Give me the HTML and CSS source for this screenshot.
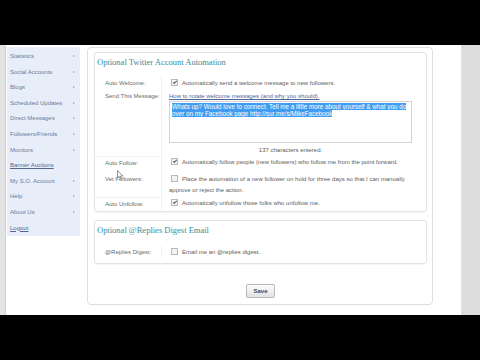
FILE: index.html
```html
<!DOCTYPE html>
<html lang="en">
<head>
    <meta charset="UTF-8">
    <title>Account Automation</title>
    <link rel="stylesheet" href="styles.css">
</head>
<body>
    <div class="screen">
        <div class="edge"></div>
        <ul class="sidebar">
            <li class="menu">Statistics</li>
            <li class="menu">Social Accounts</li>
            <li class="menu">Blogs</li>
            <li class="menu">Scheduled Updates</li>
            <li class="menu">Direct Messages</li>
            <li class="menu">Followers/Friends</li>
            <li class="menu">Monitors</li>
            <li><a href="#">Banner Auctions</a></li>
            <li class="menu">My S.O. Account</li>
            <li class="menu">Help</li>
            <li class="menu">About Us</li>
            <li><a href="#">Logout</a></li>
        </ul>

        <div class="panel">
            <div class="box">
                <div class="box-title">Optional Twitter Account Automation</div>
                <div class="row row-welcome">
                    <div class="label">Auto Welcome:</div>
                    <div class="value"><span class="cb on"></span>Automatically send a welcome message to new followers.</div>
                </div>
                <div class="row row-message">
                    <div class="label">Send This Message:</div>
                    <div class="value">
                        <a class="link" href="#">How to rotate welcome messages (and why you should).</a>
                        <div class="textarea"><span class="sel">Whats up? Would love to connect. Tell me a little more about yourself &amp; what you do</span><br><span class="sel">over on my Facebook page http://sur.me/s/MikeFacebook</span></div>
                        <div class="counter">137 characters entered.</div>
                    </div>
                </div>
                <div class="row row-follow">
                    <div class="label">Auto Follow:</div>
                    <div class="value"><span class="cb on"></span>Automatically follow people (new followers) who follow me from the point forward.</div>
                </div>
                <div class="row row-vet">
                    <div class="label">Vet Followers:</div>
                    <div class="value"><span class="cb"></span>Place the automation of a new follower on hold for three days so that I can manually approve or reject the action.</div>
                </div>
                <div class="row row-unfollow">
                    <div class="label">Auto Unfollow:</div>
                    <div class="value"><span class="cb on"></span>Automatically unfollow those folks who unfollow me.</div>
                </div>
            </div>

            <div class="box box-digest">
                <div class="box-title">Optional @Replies Digest Email</div>
                <div class="row row-digest">
                    <div class="label">@Replies Digest:</div>
                    <div class="value"><span class="cb"></span>Email me an @replies digest.</div>
                </div>
            </div>

            <div class="actions">
                <button type="button">Save</button>
            </div>
        </div>

        <div class="spacer"></div>
        <div class="gray"></div>

        <!-- mouse pointer -->
        <svg class="cursor" width="7" height="10" viewBox="0 0 7 10">
            <path d="M0.5 0.5 L0.5 8 L2.3 6.3 L3.6 9.3 L4.6 8.9 L3.4 6 L5.8 6 Z" fill="#fff" stroke="#444" stroke-width="0.6"/>
        </svg>
    </div>
</body>
</html>
```

FILE: styles.css
```css
body {
    margin: 0;
    background: #000;
    font-family: "Liberation Sans", Arial, sans-serif;
    font-size: 6px;
    color: #606060;
}
.screen {
    position: relative;
    margin-top: 45px;
    height: 270px;
    background: #fff;
    display: flex;
    align-items: flex-start;
}
.edge {
    width: 5px;
    height: 100%;
    background: #e3e3e3;
    border-right: 1px solid #cdcdcd;
}
.sidebar {
    list-style: none;
    width: 73px;
    margin: 2px 0 0 1px;
    padding: 2px 0 0 0;
    background: #e7eef9;
    box-sizing: border-box;
    height: 189px;
}
.sidebar li {
    position: relative;
    height: 15.6px;
    line-height: 15.6px;
    padding-left: 3px;
    color: #6b7a9c;
}
.sidebar li.menu::after {
    content: "";
    position: absolute;
    right: 5px;
    top: 6px;
    border-left: 2.5px solid #97a2bb;
    border-top: 1.8px solid transparent;
    border-bottom: 1.8px solid transparent;
}
.sidebar a {
    color: #55658c;
}
.panel {
    width: 346px;
    height: 258px;
    margin: 2px 0 0 7px;
    padding: 4px 5px 0 6px;
    box-sizing: border-box;
    border: 1px solid #dedede;
    border-radius: 4px;
}
.box {
    border: 1px solid #e2e2e2;
    border-radius: 3px;
    padding: 3px 0 1px 0;
    box-shadow: 0 1px 1px rgba(0, 0, 0, 0.04);
}
.box-digest {
    margin-top: 8px;
    padding-bottom: 5px;
}
.box-title {
    font-family: "Liberation Serif", Georgia, serif;
    font-size: 8.5px;
    color: #3a8c99;
    line-height: 12px;
    padding-left: 2px;
    margin-bottom: 8px;
}
.box-digest .box-title {
    margin-bottom: 10px;
}
.row {
    display: grid;
    grid-template-columns: 67px 246px;
    line-height: 12px;
}
.label {
    padding-left: 10px;
    color: #6a6a6a;
    border-right: 1px solid #f0f0f0;
}
.value {
    padding-left: 7px;
}
.row-welcome {
    line-height: 14px;
}
.row-message .label {
    padding-top: 2px;
    line-height: 9px;
}
.row-follow .label,
.row-unfollow .label {
    border-top: 1px solid #f2f2f2;
}
.link {
    display: block;
    padding-top: 2px;
    line-height: 9px;
    color: #51648f;
}
.textarea {
    width: 243px;
    height: 42px;
    box-sizing: border-box;
    border: 1px solid #d2d2d2;
    padding: 2px 2px;
    font-size: 6.3px;
    line-height: 6.8px;
}
.sel {
    background: #3f9cf0;
    color: #fff;
}
.counter {
    width: 243px;
    text-align: center;
    margin-top: 2px;
    line-height: 10px;
    padding-bottom: 1px;
}
.row-vet .label,
.row-vet .value {
    padding-top: 5px;
    padding-bottom: 1px;
    line-height: 11px;
}
.cb {
    display: inline-block;
    position: relative;
    width: 5px;
    height: 5px;
    margin: 0 4px 0 2px;
    vertical-align: -1px;
    border: 1px solid #b9b9b9;
    background: #f3f3f3;
}
.cb.on::after {
    content: "";
    position: absolute;
    left: 1.5px;
    top: 0;
    width: 1.2px;
    height: 2.8px;
    border-right: 1px solid #555;
    border-bottom: 1px solid #555;
    transform: rotate(45deg);
}
.actions {
    margin-top: 20px;
    text-align: center;
}
button {
    width: 29px;
    height: 14px;
    padding: 0;
    font-family: "Liberation Sans", Arial, sans-serif;
    font-size: 6px;
    font-weight: bold;
    color: #3a4663;
    border: 1px solid #b8b8b8;
    border-radius: 2px;
    background: linear-gradient(#fdfdfd, #e2e2e2);
}
.spacer {
    width: 28px;
    height: 100%;
    border-right: 1px solid #e3e3e3;
}
.gray {
    flex: 1;
    height: 100%;
    background: #dcdcdc;
}
.cursor {
    position: absolute;
    left: 117px;
    top: 125px;
}
```
